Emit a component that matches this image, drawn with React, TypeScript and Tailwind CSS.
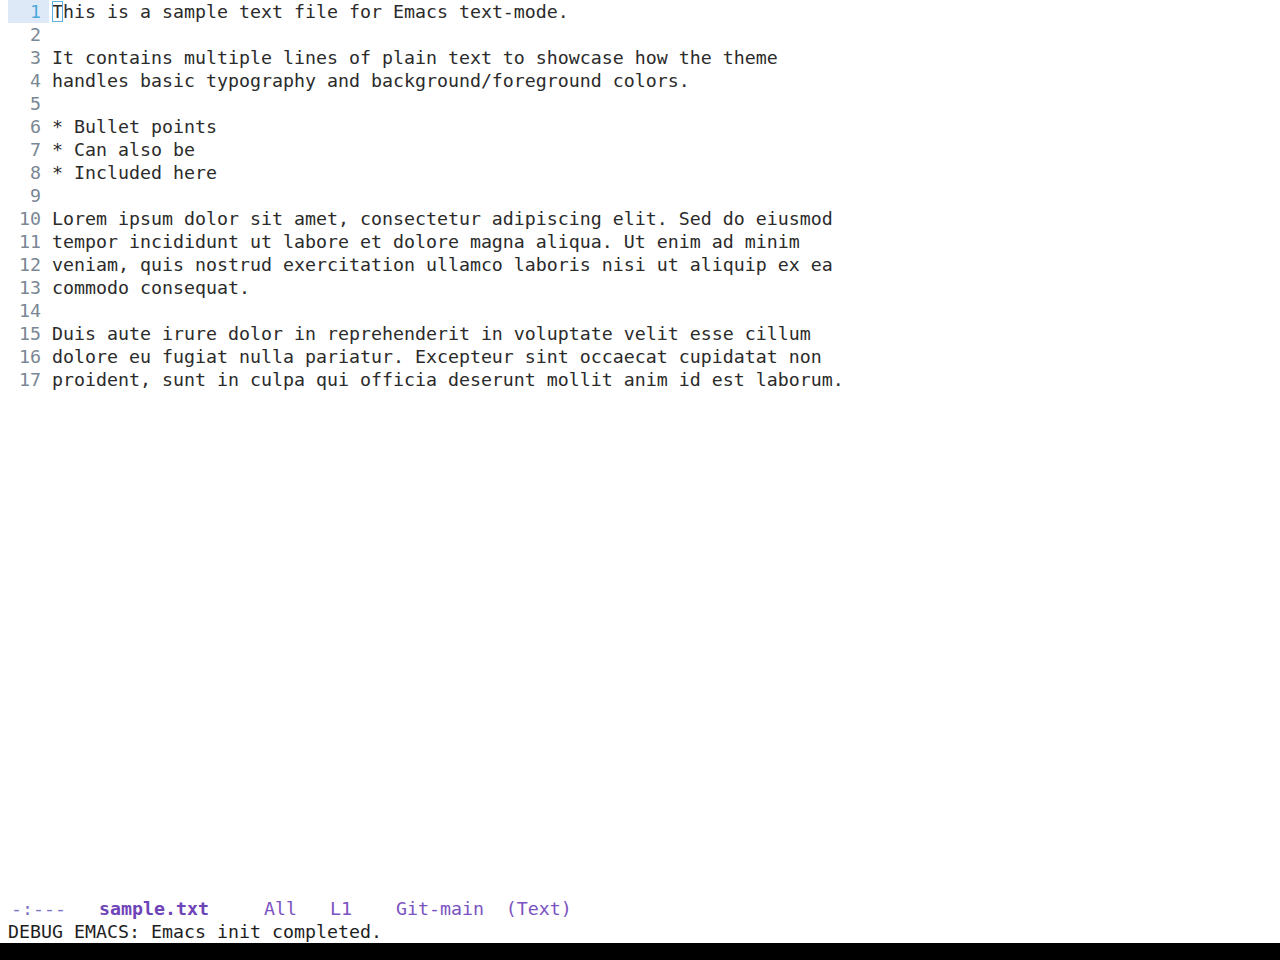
import React from "react";

const lines = [
  "This is a sample text file for Emacs text-mode.",
  "",
  "It contains multiple lines of plain text to showcase how the theme",
  "handles basic typography and background/foreground colors.",
  "",
  "* Bullet points",
  "* Can also be",
  "* Included here",
  "",
  "Lorem ipsum dolor sit amet, consectetur adipiscing elit. Sed do eiusmod",
  "tempor incididunt ut labore et dolore magna aliqua. Ut enim ad minim",
  "veniam, quis nostrud exercitation ullamco laboris nisi ut aliquip ex ea",
  "commodo consequat.",
  "",
  "Duis aute irure dolor in reprehenderit in voluptate velit esse cillum",
  "dolore eu fugiat nulla pariatur. Excepteur sint occaecat cupidatat non",
  "proident, sunt in culpa qui officia deserunt mollit anim id est laborum.",
];

export default function App() {
  return (
    <div
      className="flex h-[960px] w-[1280px] flex-col bg-white text-[18.27px] leading-[23px] text-[#2b2b2b]"
      style={{ fontFamily: '"DejaVu Sans Mono", monospace' }}
    >
      {/* buffer */}
      <div className="flex-1 overflow-hidden">
        {lines.map((text, i) => {
          const current = i === 0;
          return (
            <div key={i} className="flex h-[23px] whitespace-pre pl-[8px]">
              <div
                className={
                  current
                    ? "w-[41px] shrink-0 bg-[#dde9f7] pr-[8px] text-right text-[#4ea9dc]"
                    : "w-[41px] shrink-0 pr-[8px] text-right text-[#7a8794]"
                }
              >
                {i + 1}
              </div>
              <div className="ml-[3px]">
                {current ? (
                  <>
                    <span className="outline outline-1 -outline-offset-1 outline-[#5ab0e0]">T</span>
                    {text.slice(1)}
                  </>
                ) : (
                  text
                )}
              </div>
            </div>
          );
        })}
      </div>

      {/* mode line */}
      <div className="flex h-[23px] whitespace-pre pl-[11px] text-[#7a52c2]">
        <span className="text-[#7b74c9]">-:---   </span>
        <span className="font-bold text-[#6f44b8]">sample.txt</span>
        <span>     All   L1    Git-main  (Text)</span>
      </div>

      {/* echo area */}
      <div className="h-[23px] whitespace-pre pl-[8px] text-[#1e1e1e]">
        DEBUG EMACS: Emacs init completed.
      </div>

      <div className="h-[17px] bg-black" />
    </div>
  );
}
